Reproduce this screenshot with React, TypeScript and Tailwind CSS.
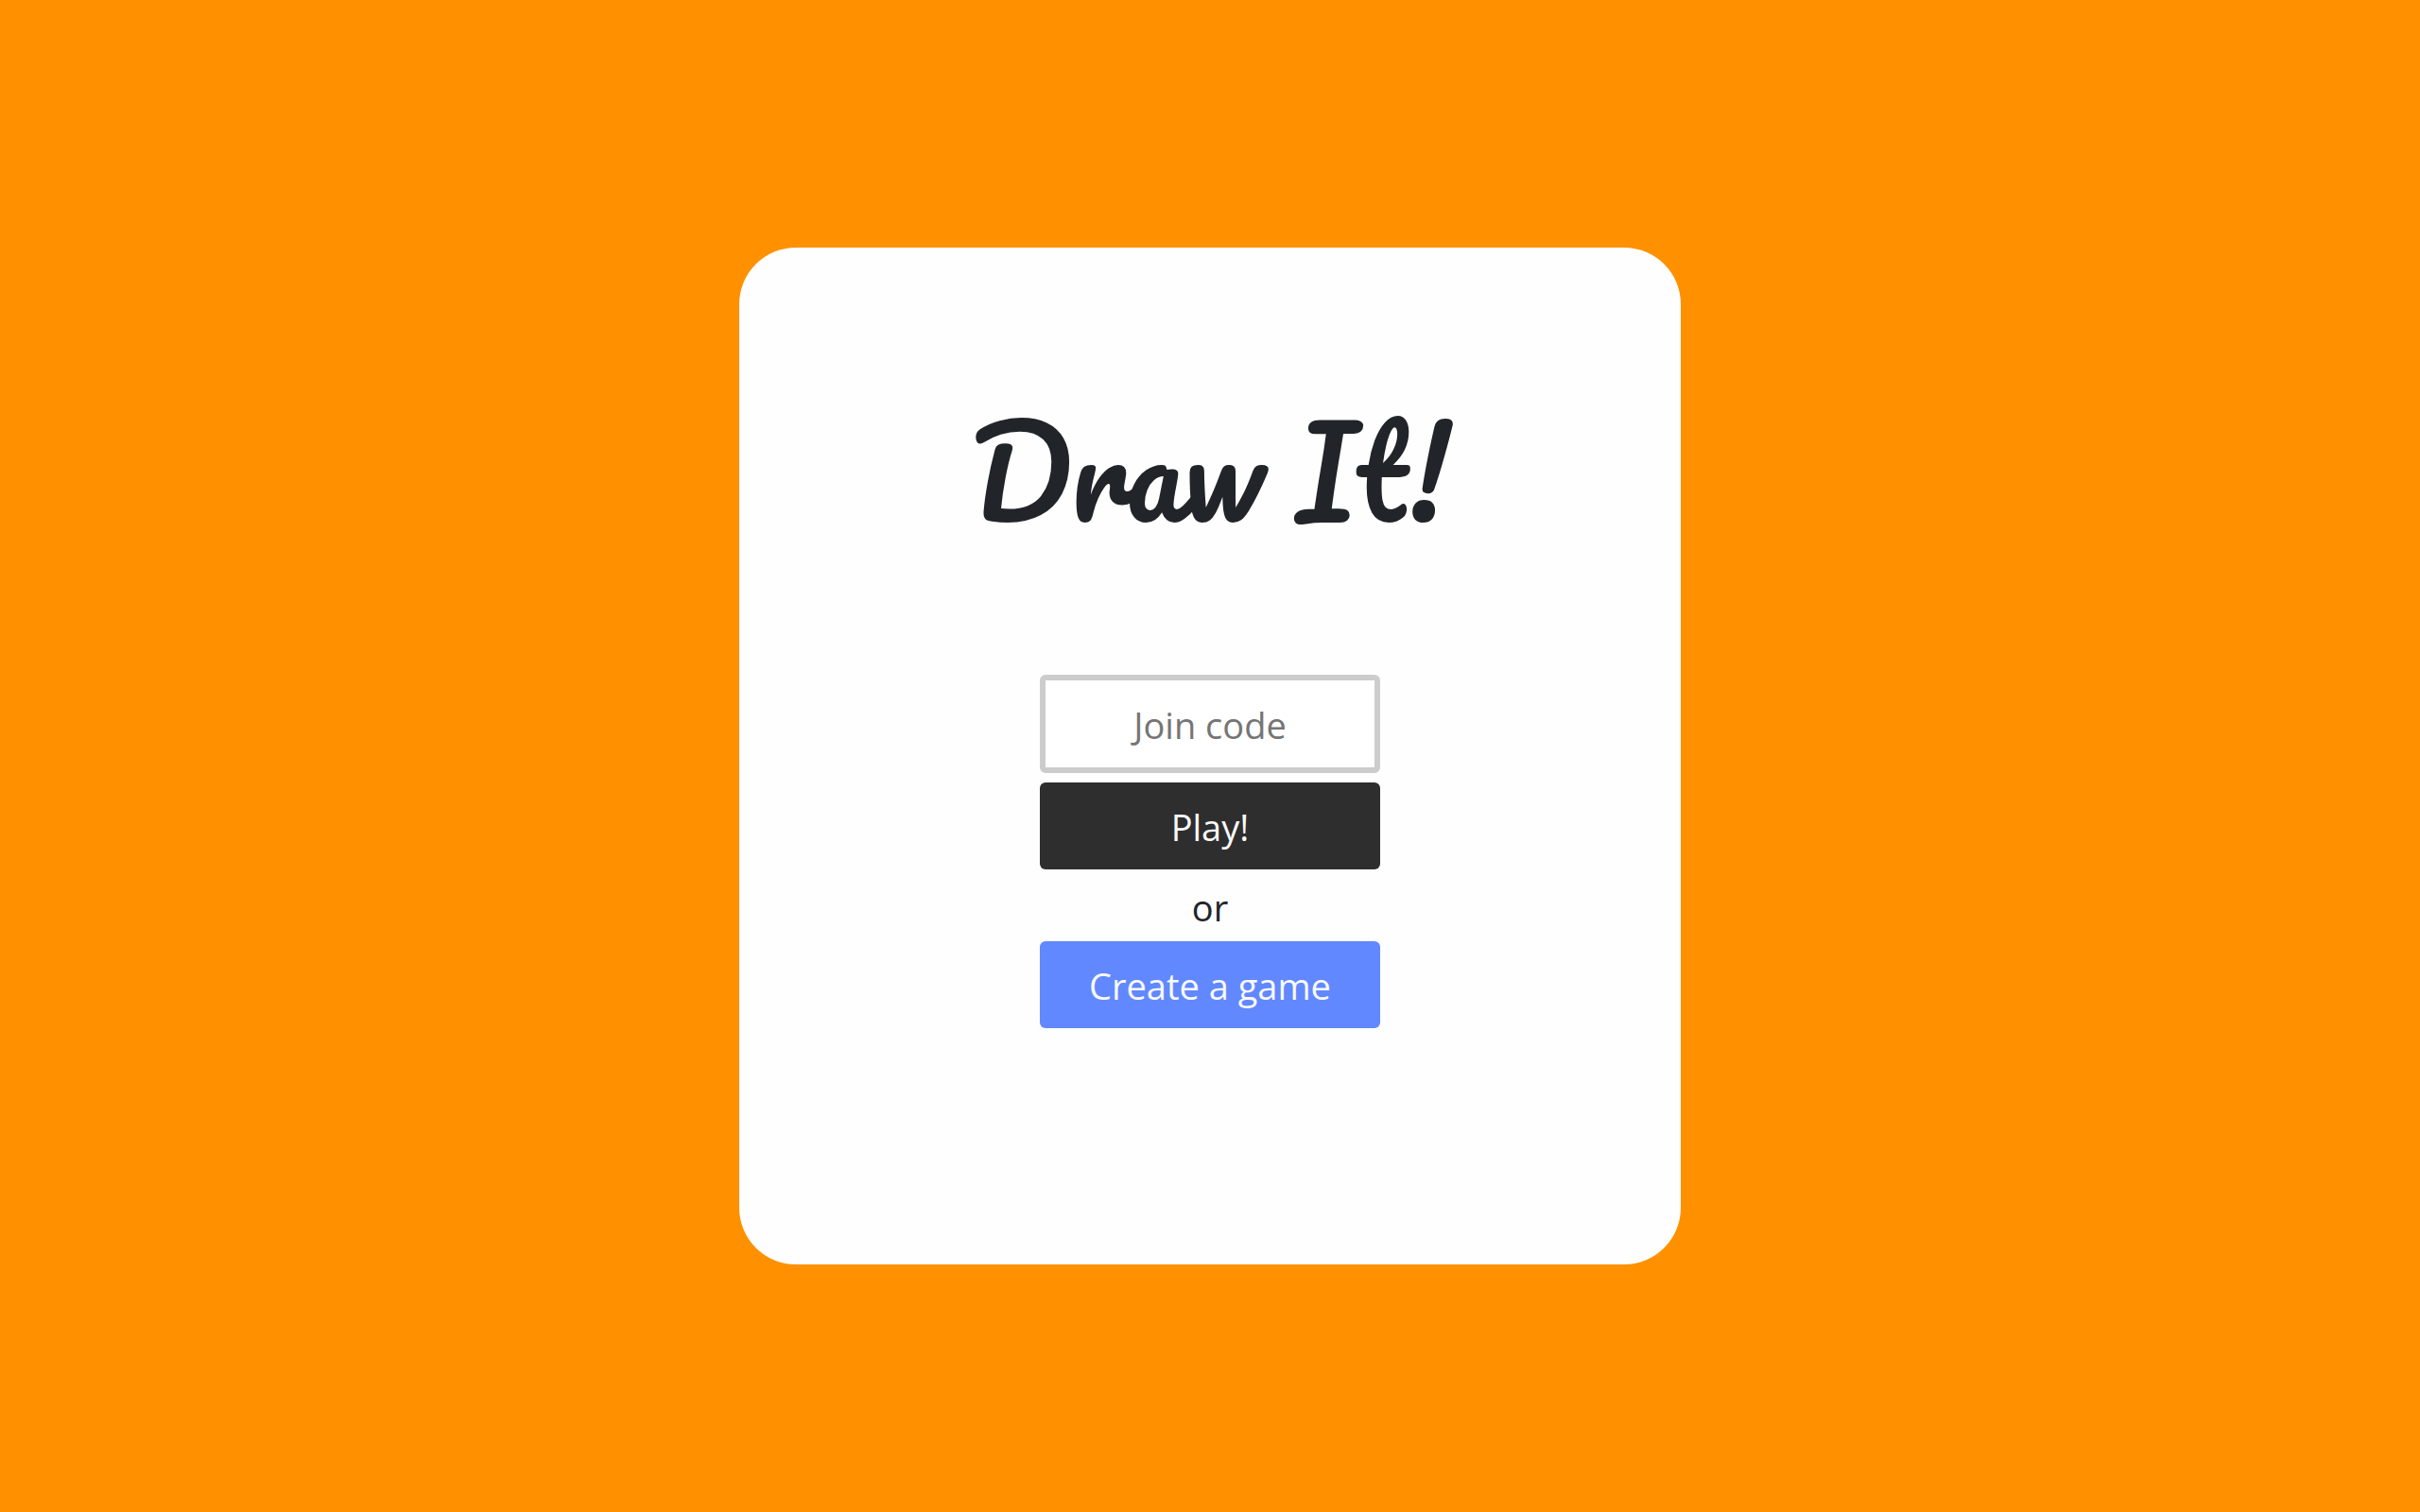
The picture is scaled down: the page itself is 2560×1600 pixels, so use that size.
import React, { useState } from "react";

const buttonClass =
  "h-[92px] w-full cursor-pointer rounded-md pt-0.5 text-[38px] leading-[48px] text-[#f8f9fa]";

export default function App() {
  const [code, setCode] = useState("");

  return (
    <main className="flex min-h-screen items-center justify-center bg-[#ff9100] font-['Segoe_UI','Open_Sans',sans-serif] text-[#212529]">
      <section className="flex w-full max-w-[996px] flex-col items-center rounded-[60px] bg-[#fefefe] px-8 pt-35 pb-[250px]">
        <h1 className="mb-30 text-center font-['Pacifico',cursive] text-[128px] leading-[192px] font-normal whitespace-nowrap">
          Draw It!
        </h1>
        <form
          className="flex w-full max-w-[360px] flex-col items-center"
          onSubmit={(event) => event.preventDefault()}
        >
          <input
            type="text"
            aria-label="Join code"
            placeholder="Join code"
            value={code}
            onChange={(event) => setCode(event.target.value)}
            className="mb-2.5 h-[104px] w-full rounded-md border-6 border-[#cccccc] bg-white pt-0.5 text-center text-[38px] text-[#212529] outline-none placeholder:text-[#757575]"
          />
          <button type="submit" className={`${buttonClass} bg-[#2e2e2e]`}>
            Play!
          </button>
          <p className="flex h-[76px] items-center pt-1 text-[38px] leading-[48px]">or</p>
          <button type="button" className={`${buttonClass} bg-[#6188ff]`}>
            Create a game
          </button>
        </form>
      </section>
    </main>
  );
}
